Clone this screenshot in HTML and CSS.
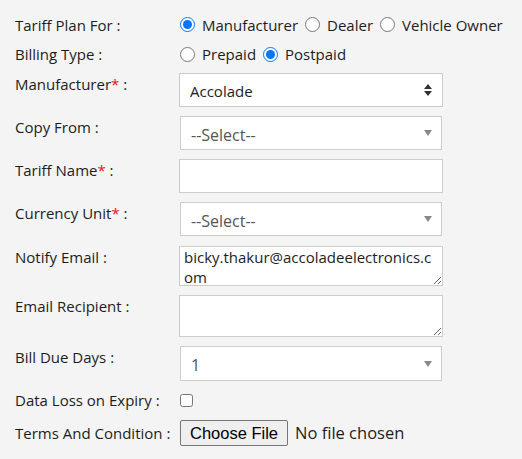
FILE: index.html
```html
<!DOCTYPE html>
<html>
<head>
<meta charset="utf-8">
<link rel="stylesheet" href="styles.css">
</head>
<body>
<form class="form">
  <div class="row row-radio r1">
    <label class="lbl">Tariff Plan For :</label>
    <div class="opts">
      <label class="opt"><input type="radio" name="plan" checked><span>Manufacturer</span></label>
      <label class="opt"><input type="radio" name="plan"><span>Dealer</span></label>
      <label class="opt"><input type="radio" name="plan"><span>Vehicle Owner</span></label>
    </div>
  </div>
  <div class="row row-radio r2">
    <label class="lbl">Billing Type :</label>
    <div class="opts">
      <label class="opt"><input type="radio" name="bill"><span>Prepaid</span></label>
      <label class="opt"><input type="radio" name="bill" checked><span>Postpaid</span></label>
    </div>
  </div>
  <div class="row">
    <label class="lbl">Manufacturer<span class="req">*</span> :</label>
    <div class="box sel native">
      <span class="val">Accolade</span>
      <svg width="10" height="14" viewBox="0 0 10 14"><path d="M5 1 L9 6 H1 Z M5 13 L9 8 H1 Z" fill="#333"/></svg>
    </div>
  </div>
  <div class="row">
    <label class="lbl">Copy From :</label>
    <div class="box sel chosen">
      <span class="val muted">--Select--</span>
      <svg width="10" height="8" viewBox="0 0 10 8"><path d="M1 1 H9 L5 7 Z" fill="#888"/></svg>
    </div>
  </div>
  <div class="row">
    <label class="lbl">Tariff Name<span class="req">*</span> :</label>
    <input class="box text" type="text">
  </div>
  <div class="row">
    <label class="lbl">Currency Unit<span class="req">*</span> :</label>
    <div class="box sel chosen">
      <span class="val muted">--Select--</span>
      <svg width="10" height="8" viewBox="0 0 10 8"><path d="M1 1 H9 L5 7 Z" fill="#888"/></svg>
    </div>
  </div>
  <div class="row r7">
    <label class="lbl">Notify Email :</label>
    <textarea class="box area a1">bicky.thakur@accoladeelectronics.com</textarea>
  </div>
  <div class="row">
    <label class="lbl">Email Recipient :</label>
    <textarea class="box area a2"></textarea>
  </div>
  <div class="row">
    <label class="lbl">Bill Due Days :</label>
    <div class="box sel chosen tall">
      <span class="val muted">1</span>
      <svg width="10" height="8" viewBox="0 0 10 8"><path d="M1 1 H9 L5 7 Z" fill="#888"/></svg>
    </div>
  </div>
  <div class="row row-check">
    <label class="lbl">Data Loss on Expiry :</label>
    <input class="check" type="checkbox">
  </div>
  <div class="row row-file">
    <label class="lbl">Terms And Condition :</label>
    <input class="file" type="file">
  </div>
</form>
</body>
</html>
```
FILE: styles.css
```css
html, body {
  margin: 0;
  padding: 0;
  background: #f4f4f4;
}
body {
  font-family: "Open Sans", "Liberation Sans", sans-serif;
  font-size: 15px;
  color: #1d1d1d;
}
.form {
  display: flex;
  flex-direction: column;
  gap: 9px;
  padding: 14px 0 0 15px;
}
.row {
  display: flex;
  align-items: flex-start;
}
.lbl {
  width: 164px;
  flex: none;
  line-height: 20px;
  padding-top: 1px;
  color: #1d1d1d;
}
.req {
  color: #e8141e;
}
.row-radio {
  align-items: center;
  height: 21px;
}
.row-radio .lbl {
  padding-top: 0;
}
.r2 {
  height: 20px;
}
.opts {
  display: flex;
  align-items: center;
  gap: 6px;
}
.opt {
  display: flex;
  align-items: center;
  gap: 7px;
  line-height: 20px;
}
.opt input {
  margin: 0 0 0 1px;
  width: 15px;
  height: 15px;
  accent-color: #0075ff;
}
.box {
  box-sizing: border-box;
  width: 264px;
  border: 1px solid #ccc;
  background: #fff;
  margin: 0;
  font-family: "Open Sans", "Liberation Sans", sans-serif;
  font-size: 15px;
  color: #1d1d1d;
}
.sel {
  height: 34px;
  display: flex;
  align-items: center;
  justify-content: space-between;
  padding: 0 9px 0 10px;
}
.sel .val {
  padding-top: 1px;
}
.sel.chosen {
  width: 262px;
  margin-left: 1px;
  padding: 0 8px 0 10px;
  font-size: 16px;
}
.sel.chosen .val {
  padding-top: 3px;
}
.sel.tall {
  height: 35px;
}
.muted {
  color: #555;
}
.text {
  height: 34px;
  padding: 0 6px;
  outline: none;
}
.area {
  padding: 0 4px;
  line-height: 20px;
  resize: both;
  outline: none;
  overflow: hidden;
}
.r7 {
  margin-top: 1px;
}
.a1 {
  height: 40px;
}
.a2 {
  height: 42px;
}
.row-check {
  height: 20px;
  align-items: center;
}
.row-check .lbl {
  padding-top: 0;
}
.check {
  margin: 0 0 0 1px;
  width: 13px;
  height: 13px;
}
.row-file {
  align-items: center;
  margin-top: 1px;
}
.row-file .lbl {
  padding-top: 0;
}
.file {
  margin: 0 0 0 1px;
  font-family: "Open Sans", "Liberation Sans", sans-serif;
  font-size: 16.5px;
  color: #1d1d1d;
}
.file::file-selector-button {
  font-family: "Liberation Sans", Arial, sans-serif;
  font-size: 16.5px;
  height: 26px;
  padding: 0 9px;
  margin-right: 7px;
  background: #efefef;
  border: 1px solid #767676;
  border-radius: 2px;
  color: #000;
}
```
